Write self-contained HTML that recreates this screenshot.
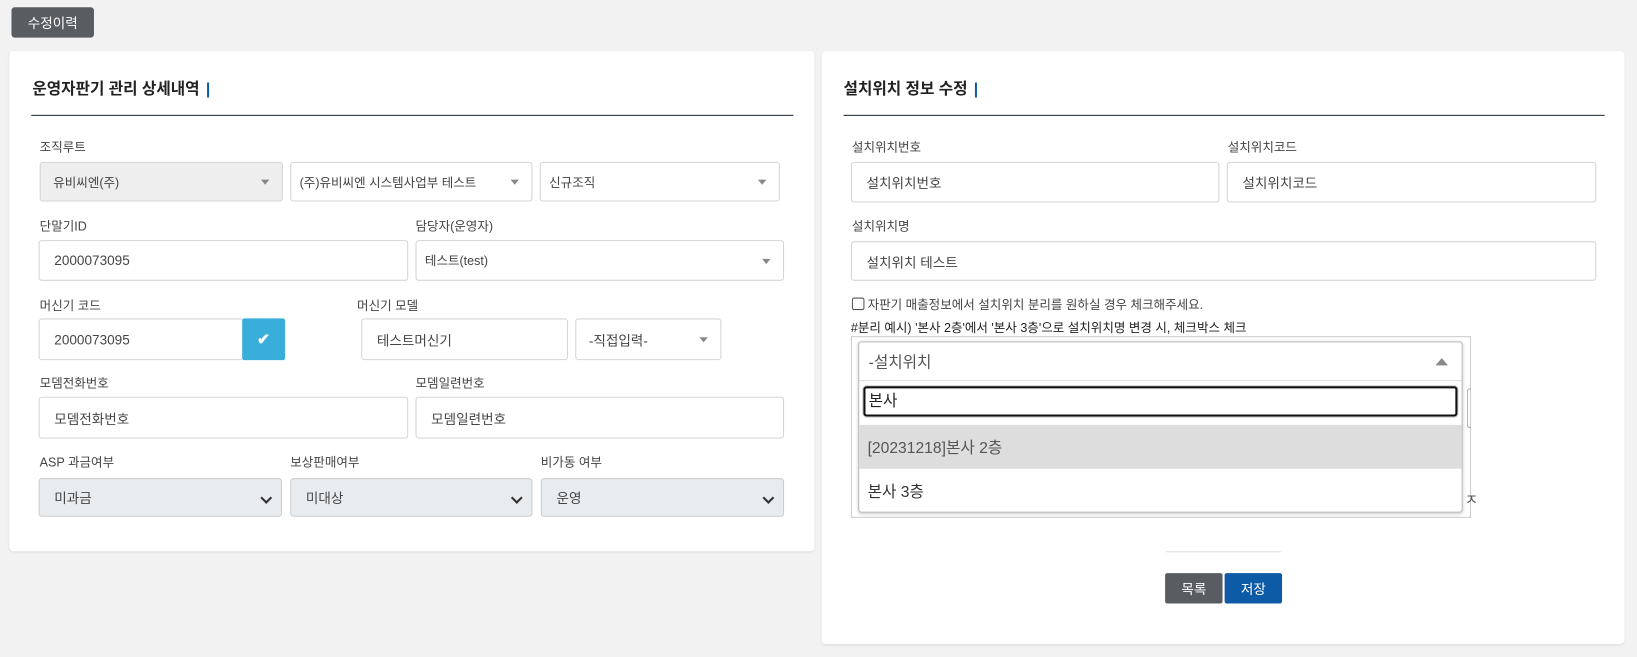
<!DOCTYPE html>
<html><head><meta charset="utf-8"><style>
*{box-sizing:border-box;margin:0;padding:0}
html,body{width:1637px;height:657px;overflow:hidden;background:#f2f2f2}
#w{width:1568px;height:630px;position:relative;transform:scale(1.04401);transform-origin:0 0;font-family:"Liberation Sans","Noto Sans CJK KR",sans-serif;font-size:13px;color:#333}
.a{position:absolute}
.card{background:#fff;border-radius:4px;box-shadow:0 1px 2px rgba(0,0,0,.08)}
.ttl{font-size:15px;font-weight:bold;color:#222}
.ttl b{color:#0d5aa7;margin-left:6px}
.hr{height:1px;background:#1e2a36}
.lbl{font-size:12px;color:#444}
.inp{border:1px solid #d5d5d5;border-radius:3px;background:#fff;font-size:13px;color:#444;display:flex;align-items:center;padding-left:14px}
.sel{border:1px solid #d5d5d5;border-radius:3px;background:#fff;font-size:12px;color:#444;display:flex;align-items:center;padding-left:8px}
.sel:after{content:"";position:absolute;right:12px;top:50%;margin-top:-2px;border-left:4px solid transparent;border-right:4px solid transparent;border-top:5px solid #888}
.gs{background:#e9ecef;border:1px solid #ccc;border-radius:3px;font-size:13px;color:#444;display:flex;align-items:center;padding-left:14px}
.gs:after{content:"";position:absolute;right:10px;top:50%;margin-top:-4px;width:6px;height:6px;border-right:2px solid #333;border-bottom:2px solid #333;transform:rotate(45deg)}
.btn{color:#fff;font-size:13px;display:flex;align-items:center;justify-content:center;border-radius:2px}
</style></head><body><div id="w">
<div class="a btn" style="left:11px;top:7px;width:79px;height:29px;background:#595d61;border-radius:3px">수정이력</div>

<div class="a card" style="left:9px;top:49px;width:771px;height:479px"></div>
<div class="a ttl" style="left:31px;top:74px">운영자판기 관리 상세내역<b>|</b></div>
<div class="a hr" style="left:30px;top:110px;width:730px"></div>
<div class="a lbl" style="left:38px;top:132px">조직루트</div>
<div class="a sel" style="left:38px;top:155px;width:233px;height:38px;background:#eee;padding-left:12px">유비씨엔(주)</div>
<div class="a sel" style="left:278px;top:155px;width:232px;height:38px">(주)유비씨엔 시스템사업부 테스트</div>
<div class="a sel" style="left:517px;top:155px;width:230px;height:38px">신규조직</div>
<div class="a lbl" style="left:38px;top:208px">단말기ID</div>
<div class="a lbl" style="left:398px;top:208px">담당자(운영자)</div>
<div class="a inp" style="left:37px;top:230px;width:354px;height:39px">2000073095</div>
<div class="a sel" style="left:398px;top:230px;width:353px;height:39px">테스트(test)</div>
<div class="a lbl" style="left:38px;top:284px">머신기 코드</div>
<div class="a lbl" style="left:342px;top:284px">머신기 모델</div>
<div class="a inp" style="left:37px;top:305px;width:196px;height:40px">2000073095</div>
<div class="a btn" style="left:232px;top:305px;width:41px;height:40px;background:#3aaedb;font-size:15px;font-weight:bold">✔</div>
<div class="a inp" style="left:346px;top:305px;width:198px;height:40px">테스트머신기</div>
<div class="a sel" style="left:551px;top:305px;width:140px;height:40px;font-size:13px;padding-left:12px">-직접입력-</div>
<div class="a lbl" style="left:38px;top:358px">모뎀전화번호</div>
<div class="a lbl" style="left:398px;top:358px">모뎀일련번호</div>
<div class="a inp" style="left:37px;top:380px;width:354px;height:40px">모뎀전화번호</div>
<div class="a inp" style="left:398px;top:380px;width:353px;height:40px">모뎀일련번호</div>
<div class="a lbl" style="left:38px;top:434px">ASP 과금여부</div>
<div class="a lbl" style="left:278px;top:434px">보상판매여부</div>
<div class="a lbl" style="left:518px;top:434px">비가동 여부</div>
<div class="a gs" style="left:37px;top:458px;width:233px;height:37px">미과금</div>
<div class="a gs" style="left:278px;top:458px;width:232px;height:37px">미대상</div>
<div class="a gs" style="left:518px;top:458px;width:233px;height:37px">운영</div>

<div class="a card" style="left:787px;top:49px;width:769px;height:568px"></div>
<div class="a ttl" style="left:808px;top:74px">설치위치 정보 수정<b>|</b></div>
<div class="a hr" style="left:808px;top:110px;width:729px"></div>
<div class="a lbl" style="left:816px;top:132px">설치위치번호</div>
<div class="a lbl" style="left:1176px;top:132px">설치위치코드</div>
<div class="a inp" style="left:815px;top:155px;width:353px;height:39px">설치위치번호</div>
<div class="a inp" style="left:1175px;top:155px;width:354px;height:39px">설치위치코드</div>
<div class="a lbl" style="left:816px;top:208px">설치위치명</div>
<div class="a inp" style="left:815px;top:231px;width:714px;height:38px">설치위치 테스트</div>
<div class="a" style="left:816px;top:285px;width:12px;height:12px;border:1px solid #555;border-radius:2px"></div>
<div class="a lbl" style="left:831px;top:283px">자판기 매출정보에서 설치위치 분리를 원하실 경우 체크해주세요.</div>
<div class="a lbl" style="left:815px;top:305px;color:#222">#분리 예시) '본사 2층'에서 '본사 3층'으로 설치위치명 변경 시, 체크박스 체크</div>
<div class="a" style="left:815px;top:322px;width:594px;height:174px;border:1px solid #ccc;background:#fff"></div>
<div class="a" style="left:1405px;top:372px;width:4px;height:38px;border:1px solid #aaa;border-right:none;border-radius:3px 0 0 3px"></div>
<div class="a" style="left:1403px;top:468px;font-size:14px;color:#555">ㅈ</div>
<div class="a" style="left:822px;top:327px;width:579px;height:164px;border:1px solid #bbb;border-radius:3px;background:#fff;box-shadow:0 1px 3px rgba(0,0,0,.2)">
 <div style="height:37px;border-bottom:1px solid #ddd;display:flex;align-items:center;padding-left:9px;font-size:15px;color:#555;position:relative">-설치위치<span style="position:absolute;right:13px;top:15px;border-left:6px solid transparent;border-right:6px solid transparent;border-bottom:7px solid #888"></span></div>
 <div style="padding:5px 4px 4px 4px;height:42px"><div style="height:29px;border:2px solid #111;border-radius:3px;box-shadow:0 0 0 1px #ccc;font-size:15px;color:#222;padding-left:3px;line-height:25px">본사</div></div>
 <div style="height:42px;background:#ddd;display:flex;align-items:center;padding-left:8px;font-size:15px;color:#555">[20231218]본사 2층</div>
 <div style="height:42px;display:flex;align-items:center;padding-left:8px;font-size:15px;color:#333">본사 3층</div>
</div>
<div class="a" style="left:1117px;top:528px;width:110px;height:1px;background:#ddd"></div>
<div class="a btn" style="left:1116px;top:549px;width:55px;height:29px;background:#595d61">목록</div>
<div class="a btn" style="left:1173px;top:549px;width:55px;height:29px;background:#0d5aa7">저장</div>
</div></body></html>
